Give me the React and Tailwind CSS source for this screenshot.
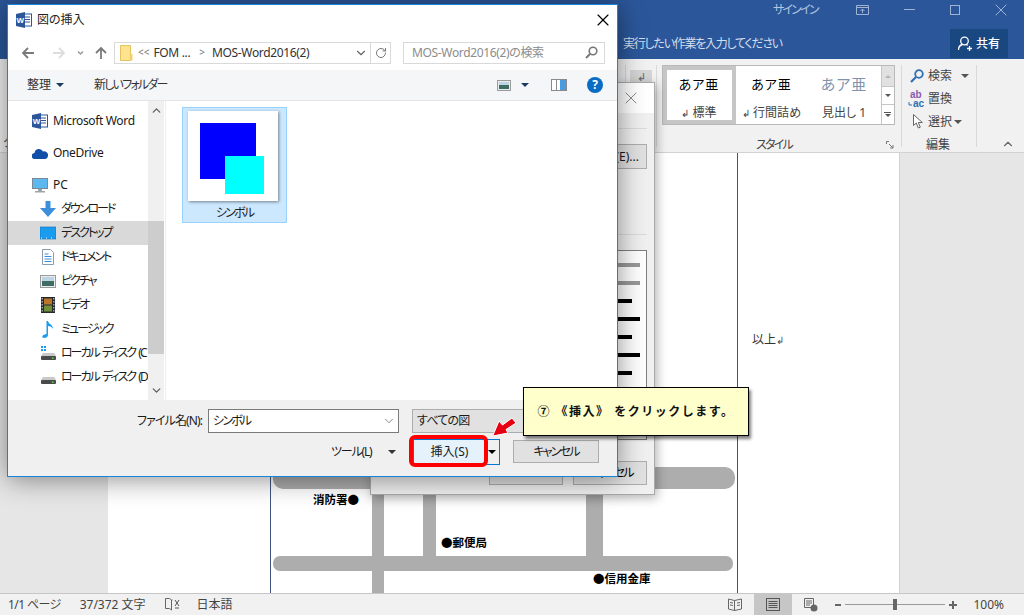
import { ChevronDown, ChevronUp, RotateCw, X } from 'lucide-react'

// kana in the reference is set much tighter than Noto's, even with palt
const KANA = 'tracking-[-1.8px] whitespace-nowrap'
const LATIN = 'tracking-[-0.35px] whitespace-nowrap'

const NAV_ITEMS = [
  { label: 'ダウンロード', icon: 'download' },
  { label: 'デスクトップ', icon: 'desktop', active: true },
  { label: 'ドキュメント', icon: 'doc' },
  { label: 'ピクチャ', icon: 'picture' },
  { label: 'ビデオ', icon: 'video' },
  { label: 'ミュージック', icon: 'music' },
  { label: 'ローカル ディスク (C', icon: 'diskc' },
  { label: 'ローカル ディスク (D', icon: 'disk' },
]

const PREVIEW_BARS = [
  'bg-[#999999] w-[22px]',
  'bg-[#999999] w-[22px]',
  'bg-black w-[14px]',
  'bg-black w-[22px]',
  'bg-black w-[14px]',
  'bg-black w-[22px]',
  'bg-black w-[14px]',
]

function Triangle({ className = 'border-t-[#1f3a60]' }) {
  return <span className={`inline-block w-0 h-0 border-x-[4px] border-x-transparent border-t-[4px] ${className}`} />
}

function WordLogo() {
  return (
    <svg width="16" height="16" viewBox="0 0 16 16">
      <rect x="5" y="2" width="10.5" height="12" fill="#fff" stroke="#2b579a" />
      <path d="M9 5h5M9 7.5h5M9 10h5" stroke="#2b579a" />
      <path d="M0 2l9-2v16l-9-2z" fill="#2b579a" />
      <text x="4.4" y="11" fontSize="8" fontWeight="700" fill="#fff" textAnchor="middle" fontFamily="Liberation Sans">W</text>
    </svg>
  )
}

function NavIcon({ type }) {
  if (type === 'download') {
    return (
      <svg width="16" height="16" viewBox="0 0 16 16">
        <path d="M5.5 0h5v7H16l-8 9-8-9h5.500z" fill="#3d8fdc" />
      </svg>
    )
  }
  if (type === 'desktop') {
    return (
      <svg width="16" height="14" viewBox="0 0 16 14">
        <rect x="0" y="1" width="16" height="12" fill="#1a9cf0" stroke="#0f6fb8" strokeWidth="0.6" />
        <path d="M1 12h14" stroke="#fff" strokeDasharray="1 4" />
      </svg>
    )
  }
  if (type === 'doc') {
    return (
      <svg width="14" height="16" viewBox="0 0 14 16">
        <path d="M1.500.5h8l3 3v12h-11z" fill="#fff" stroke="#8a9bab" />
        <path d="M3.500 5h4M3.500 7.500h7M3.500 10h7M3.500 12.500h7" stroke="#3d8fdc" />
      </svg>
    )
  }
  if (type === 'picture') {
    return (
      <svg width="16" height="13" viewBox="0 0 16 13">
        <rect x="0.500" y="0.500" width="15" height="12" fill="#e8eef2" stroke="#9a9a9a" />
        <rect x="2" y="2" width="12" height="4" fill="#bcd4e4" />
        <rect x="2" y="6" width="12" height="5" fill="#3e6e62" />
      </svg>
    )
  }
  if (type === 'video') {
    return (
      <svg width="14" height="16" viewBox="0 0 14 16">
        <rect width="14" height="16" fill="#24292e" />
        <rect x="3" y="1.500" width="8" height="6" fill="#b9762b" />
        <rect x="3" y="8.500" width="8" height="6" fill="#6f8f3a" />
        <path d="M1.200 1v14M12.800 1v14" stroke="#ddd" strokeDasharray="1.500 1.500" />
      </svg>
    )
  }
  if (type === 'music') {
    return (
      <svg width="12" height="17" viewBox="0 0 12 17">
        <path d="M4.500 0h1.500c.5 3 5 3.500 5 8-1-2-3-3-5-3v9c0 2-2 3-4 3-3 0-2-3.500 2.500-4z" fill="#1a9cf0" />
      </svg>
    )
  }
  return (
    <svg width="15" height="16" viewBox="0 0 15 16">
      {type === 'diskc' && <path d="M0 1h2v2H0zM3 1h2v2H3zM0 4h2v2H0zM3 4h2v2H3z" fill="#1a9cf0" />}
      <path d="M2 8h11l2 3H0z" fill="#c9c9c9" />
      <rect y="11" width="15" height="4" rx="1" fill="#4a4a4a" />
      <rect x="11" y="12.500" width="1.500" height="1.500" fill="#5fdc5f" />
    </svg>
  )
}

function SidebarRow({ item }) {
  return (
    <div className={`h-6 flex items-center pl-[32px] gap-[5px] ${item.active ? 'bg-[#d9d9d9]' : ''}`}>
      <span className="w-4 flex justify-center shrink-0"><NavIcon type={item.icon} /></span>
      <span className="tracking-[-2px] [word-spacing:2px] whitespace-nowrap">{item.label}</span>
    </div>
  )
}

function InsertDialog() {
  return (
    <div className="absolute left-[7px] top-[4px] w-[611px] h-[473px] flex flex-col bg-white border border-[#1883d7] shadow-[0_2px_26px_rgba(0,0,0,0.45)] text-[#1a1a1a]">
      <div className="h-[30px] flex items-center pl-[8px] pr-[4px] gap-[5px] shrink-0">
        <WordLogo />
        <span className="text-[#222] text-[12px]">図の挿入</span>
        <X className="ml-auto" size={20} strokeWidth={1.4} color="#000" />
      </div>

      <div className="h-[35px] flex items-center shrink-0">
        <svg className="ml-[13px]" width="94" height="16" viewBox="0 0 94 16" fill="none">
          <path d="M13 8H2M7 3L2 8l5 5" stroke="#7a7a7a" strokeWidth="1.800" />
          <path d="M32 8h11M38 3l5 5-5 5" stroke="#dddddd" strokeWidth="1.800" />
          <path d="M57 6.500l2.500 2.500 2.500-2.500" stroke="#9a9a9a" strokeWidth="1.500" />
          <path d="M80 14V3M75 8l5-5 5 5" stroke="#7a7a7a" strokeWidth="1.800" />
        </svg>
        <div className="ml-[-1px] w-[277px] h-[22px] border border-[#d9d9d9] flex items-center">
          <svg className="ml-[5px] shrink-0" width="13" height="16" viewBox="0 0 13 16">
            <path d="M.5.5h10v15h-10z" fill="#ffe38f" stroke="#e3c25f" />
            <path d="M10.500 9h2v6.500h-2z" fill="#f3d071" />
          </svg>
          <span className="ml-[5px] text-[#777] text-[10px]">&lt;&lt;</span>
          <span className={`ml-[4px] text-[#333] ${LATIN}`}>FOM ...</span>
          <span className="ml-[9px] text-[#777] text-[10px]">&gt;</span>
          <span className={`ml-[7px] text-[#333] ${LATIN}`}>MOS-Word2016(2)</span>
          <ChevronDown className="ml-auto mr-[2px]" size={14} strokeWidth={2} color="#666" />
          <div className="w-[20px] h-full border-l border-[#d9d9d9] flex items-center justify-center">
            <RotateCw size={12} strokeWidth={2} color="#777" />
          </div>
        </div>
        <div className="ml-[12px] w-[202px] h-[22px] border border-[#d9d9d9] flex items-center pl-[8px] pr-[6px] text-[#8c8c8c]">
          <span className={LATIN}>MOS-Word2016(2)の検索</span>
          <svg className="ml-auto" width="13" height="13" viewBox="0 0 13 13" fill="none">
            <circle cx="8" cy="5" r="3.800" stroke="#777" strokeWidth="1.600" />
            <path d="M5 8l-4 4" stroke="#777" strokeWidth="2" />
          </svg>
        </div>
      </div>

      <div className="h-[31px] shrink-0 flex items-center bg-[#f5f6f7] border-b border-[#e5e5e5] pl-[19px] pr-[14px] text-[#333]">
        <span>整理</span>
        <span className="ml-[5px] flex"><Triangle /></span>
        <span className={`ml-[30px] ${KANA}`}>新しいフォルダー</span>
        <svg className="ml-auto" width="14" height="11" viewBox="0 0 14 11">
          <rect x="0.500" y="0.500" width="13" height="10" fill="#e8eef2" stroke="#9a9a9a" />
          <rect x="2" y="2" width="10" height="3" fill="#bcd4e4" />
          <rect x="2" y="5" width="10" height="4" fill="#3e6e62" />
        </svg>
        <span className="ml-[10px] flex"><Triangle /></span>
        <svg className="ml-[22px]" width="16" height="12" viewBox="0 0 16 12">
          <rect x="0.500" y="0.500" width="15" height="11" fill="#fff" stroke="#8a8a8a" />
          <path d="M5.500 1v10" stroke="#8a8a8a" />
          <rect x="9" y="1" width="6" height="10" fill="#4a9ce0" />
        </svg>
        <span className="ml-[20px] w-4 h-4 rounded-full bg-[#0a6cc4] text-white font-bold text-[12px] leading-none flex items-center justify-center">?</span>
      </div>

      <div className="flex-1 flex min-h-0">
        <div className="w-[140px] pt-[8px] shrink-0 overflow-hidden">
          <div className={`h-6 flex items-center pl-[24px] gap-[5px] ${LATIN}`}><WordLogo />Microsoft Word</div>
          <div className={`h-6 mt-2 flex items-center pl-[24px] gap-[5px] ${LATIN}`}>
            <svg width="16" height="11" viewBox="0 0 16 11">
              <path d="M3 11a3 3 0 01-.5-6A4.500 4.500 0 0111 3.500 3.800 3.800 0 0116 7.500c0 2-1.500 3.500-3 3.500z" fill="#0f4fa8" />
            </svg>
            OneDrive
          </div>
          <div className="h-6 mt-2 flex items-center pl-[24px] gap-[5px]">
            <svg width="16" height="15" viewBox="0 0 16 15">
              <rect x="0.500" y="0.500" width="15" height="10" fill="#5cb8ee" stroke="#7a8a96" />
              <path d="M6 11h4v2H6zM3 13h10v1.500H3z" fill="#9aa5ad" />
            </svg>
            PC
          </div>
          {NAV_ITEMS.map((item) => <SidebarRow key={item.label} item={item} />)}
        </div>
        <div className="w-[16px] shrink-0 bg-[#f0f0f0] flex flex-col items-center relative">
          <ChevronUp className="mt-[3px]" size={13} strokeWidth={2.500} color="#606060" />
          <div className="absolute left-0 right-0 top-[120px] h-[133px] bg-[#cdcdcd]" />
          <ChevronDown className="mt-auto mb-[3px]" size={13} strokeWidth={2.500} color="#606060" />
        </div>
        <div className="w-[2px] border-r border-[#eeeeee] shrink-0" />
        <div className="flex-1 pl-[16px] pt-[6px]">
          <div className="w-[105px] h-[116px] bg-[#cce8ff] border border-[#99d1ff] flex flex-col items-center pt-[3px]">
            <div className="w-[90px] h-[90px] mr-[4px] bg-white shadow-[1px_1px_3px_rgba(0,0,0,0.45)] relative">
              <div className="absolute left-[12px] top-[12px] w-[56px] h-[56px] bg-[#0000ff]" />
              <div className="absolute left-[37px] top-[45px] w-[39px] h-[38px] bg-[#00ffff]" />
            </div>
            <span className={`mt-[3px] text-[#222] ${KANA}`}>シンボル</span>
          </div>
        </div>
      </div>

      <div className="h-[76px] shrink-0 bg-[#f0f0f0] flex flex-col pt-[9px]">
        <div className="flex items-center h-[24px]">
          <span className="ml-[129px] w-[71px] tracking-[-0.9px] whitespace-nowrap">ファイル名(N):</span>
          <div className="w-[191px] h-[24px] bg-white border border-[#7a7a7a] flex items-center pl-[4px] pr-[2px]">
            <span className={KANA}>シンボル</span>
            <ChevronDown className="ml-auto" size={14} strokeWidth={1.200} color="#555" />
          </div>
          <div className="ml-[13px] w-[194px] h-[24px] bg-[#e1e1e1] border border-[#adadad] flex items-center pl-[4px] tracking-[-0.8px]">すべての図</div>
        </div>
        <div className="flex items-center mt-[5px] h-[27px]">
          <span className="ml-[323px] w-[40px] tracking-[-1.2px] whitespace-nowrap">ツール(L)</span>
          <span className="ml-[17px] flex"><Triangle className="border-t-[#333]" /></span>
          <div className="ml-[17px] w-[87px] h-[26px] flex border border-[#0078d7]">
            <div className="flex-1 bg-[#e5f1fb] flex items-center justify-center">挿入(S)</div>
            <div className="w-[14px] flex items-center justify-center"><Triangle className="border-t-black" /></div>
          </div>
          <div className={`ml-[13px] w-[86px] h-[23px] bg-[#e1e1e1] border border-[#adadad] flex items-center justify-center ${KANA}`}>キャンセル</div>
        </div>
      </div>
    </div>
  )
}

function BackDialog() {
  return (
    <div className="absolute left-[370px] top-[82px] w-[285px] h-[413px] flex flex-col items-end bg-[#f0f0f0] border border-[#a9a9a9] shadow-[2px_3px_10px_rgba(0,0,0,0.3)] pr-[7px]">
      <div className="h-[30px] self-stretch -mr-[7px] bg-white flex items-center justify-end pr-[13px] shrink-0">
        <X size={20} strokeWidth={1.2} color="#8a8a8a" />
      </div>
      <div className="mt-[15px] self-stretch border-t border-[#dcdcdc]" />
      <div className="mt-[15px] w-[100px] h-[25px] bg-[#e1e1e1] border border-[#adadad] flex items-center justify-end pr-[7px] text-[#1a1a1a]">
        (E)...
      </div>
      <div className="mt-[65px] self-stretch border-t border-[#dcdcdc]" />
      <div className="mt-[15px] w-[200px] h-[190px] bg-white border border-[#7f7f7f] flex flex-col items-start pt-[12px] pl-[170px] gap-[14px]">
        {PREVIEW_BARS.map((cls, i) => (
          <div key={i} className={`h-[4px] ${cls}`} />
        ))}
      </div>
      <div className="mt-[21px] flex gap-[10px]">
        <div className="w-[74px] h-[24px] bg-[#e1e1e1] border border-[#adadad] flex items-center justify-center">OK</div>
        <div className={`w-[74px] h-[24px] bg-[#e1e1e1] border border-[#adadad] flex items-center justify-center ${KANA}`}>キャンセル</div>
      </div>
    </div>
  )
}

function StyleItem({ sample, label, mark, w, selected, heading }) {
  return (
    <div className={`h-full flex flex-col items-center shrink-0 ${selected ? 'border-[4px] border-[#c6c6c6] pt-[4px]' : 'pt-[8px]'}`} style={{ width: w }}>
      <span className={`leading-[20px] tracking-[1px] whitespace-nowrap ${heading ? 'text-[#7f93ad] text-[15px]' : 'text-black text-[13px]'}`}>{sample}</span>
      <span className="mt-[12px] leading-[14px] text-[#444] whitespace-nowrap">{mark && <span className="text-[10px] mr-[3px]">↲</span>}{label}</span>
    </div>
  )
}

function Ribbon() {
  return (
    <div className="h-[94px] flex bg-[#f1f1f1] border-b border-[#d2d2d2] shrink-0 text-[#444]">
      <div className="w-[662px] shrink-0 flex items-start">
        <span className="mt-[75px] ml-[3px] w-[12px] shrink-0">ク</span>
        <div className="ml-[610px] mt-[6px] h-[82px] w-[32px] shrink-0 border-x border-[#d9d9d9] pl-[4px] pt-[5px]">
          <div className="w-[22px] h-[24px] bg-[#d5d5d5] flex justify-center text-[11px] leading-[14px] text-[#666]">↲</div>
        </div>
      </div>
      <div className="w-[240px] h-[82px] shrink-0 flex flex-col items-center mt-[6px] border-r border-[#d9d9d9] pr-[7px]">
        <div className="h-[60px] w-[233px] shrink-0 flex bg-white border border-[#b9b9b9]">
          <StyleItem sample="あア亜" label="標準" mark w={73} selected />
          <StyleItem sample="あア亜" label="行間詰め" mark w={72} />
          <StyleItem sample="あア亜" label="見出し 1" w={73} heading />
          <div className="ml-auto w-[14px] flex flex-col border-l border-[#c6c6c6]">
            <div className="h-[20px] bg-[#e1e1e1] flex items-center justify-center"><span className="w-0 h-0 border-x-[3px] border-x-transparent border-b-[3px] border-b-[#b5b5b5]" /></div>
            <div className="h-[19px] border-y border-[#c6c6c6] flex items-center justify-center"><span className="w-0 h-0 border-x-[3px] border-x-transparent border-t-[3px] border-t-[#555]" /></div>
            <div className="flex-1 flex flex-col items-center justify-center gap-[1px]">
              <span className="w-[7px] h-[1px] bg-[#555]" />
              <span className="w-0 h-0 border-x-[3px] border-x-transparent border-t-[3px] border-t-[#555]" />
            </div>
          </div>
        </div>
        <div className="self-stretch flex items-center justify-center relative mt-[11px] shrink-0 pr-[8px]">
          <span className={KANA}>スタイル</span>
          <svg className="absolute right-0 top-[5px]" width="8" height="8" viewBox="0 0 8 8" fill="none">
            <path d="M.5 3V.5H3M3 3l4 4M4 7h3V4" stroke="#777" />
          </svg>
        </div>
      </div>
      <div className="w-[75px] h-[82px] shrink-0 flex flex-col border-r border-[#d9d9d9] mt-[6px] pl-[8px]">
        <div className="h-[22px] shrink-0 flex items-center">
          <svg width="14" height="14" viewBox="0 0 14 14" fill="none">
            <circle cx="9" cy="5" r="3.800" stroke="#2f6fb5" strokeWidth="1.800" />
            <path d="M6 8l-5 5" stroke="#2f6fb5" strokeWidth="2.200" />
          </svg>
          <span className="ml-[4px]">検索</span>
          <span className="ml-[9px] flex"><Triangle className="border-t-[#555]" /></span>
        </div>
        <div className="h-[23px] shrink-0 flex items-center -ml-[2px]">
          <svg width="17" height="18" viewBox="0 0 17 18" fontSize="10" fontWeight="700" fontFamily="Liberation Sans">
            <text x="2" y="8" fill="#8a5bb0">ab</text>
            <text x="5" y="17" fill="#2f6fb5">ac</text>
            <path d="M1 12v3h3" fill="none" stroke="#2f6fb5" />
          </svg>
          <span className="ml-[3px]">置換</span>
        </div>
        <div className="h-[23px] shrink-0 flex items-center">
          <svg className="ml-[3px]" width="10" height="15" viewBox="0 0 10 15">
            <path d="M.5.500v11l2.800-2.500 2 5 2-.8-2-4.700h4z" fill="#fff" stroke="#666" />
          </svg>
          <span className="ml-[5px]">選択</span>
          <span className="ml-[2px] flex"><Triangle className="border-t-[#555]" /></span>
        </div>
        <span className="mt-[3px] ml-[16px] shrink-0">編集</span>
      </div>
      <div className="flex-1 flex items-end pl-[24px] pb-[1px]">
        <ChevronUp size={14} strokeWidth={2} color="#666" />
      </div>
    </div>
  )
}

function RoadMap() {
  return (
    <svg className="absolute left-0 top-0" width="466" height="440" viewBox="271 153 466 440">
      <g fill="#adadad">
        <rect x="273" y="467" width="462" height="22" rx="10" />
        <rect x="273" y="556" width="460" height="15" rx="7" />
        <rect x="372" y="480" width="12" height="113" />
        <rect x="423" y="480" width="13" height="80" />
        <rect x="586" y="480" width="17" height="80" />
      </g>
    </svg>
  )
}

function DocumentArea() {
  return (
    <div className="flex-1 flex bg-[#e6e6e6] min-h-0">
      <div className="ml-[108px] w-[792px] h-full bg-white border-r border-[#d2d2d2] pl-[162px] flex">
        <div className="w-[468px] h-full border-x border-[#3f5580] relative shrink-0 font-bold text-[11.5px] text-black [font-feature-settings:normal]">
          <RoadMap />
          <span className="absolute left-[42px] top-[338px] whitespace-nowrap">消防署●</span>
          <span className="absolute left-[170px] top-[381px] whitespace-nowrap">●郵便局</span>
          <span className="absolute left-[322px] top-[417px] whitespace-nowrap">●信用金庫</span>
        </div>
        <span className="ml-[14px] mt-[178px] text-[#333]">以上<span className="text-[10px] text-[#555]">↲</span></span>
      </div>
    </div>
  )
}

function StatusBar() {
  return (
    <div className="h-[22px] shrink-0 flex items-center bg-[#f1f1f1] border-t border-[#c6c6c6] text-[#444] pl-[8px]">
      <span className="whitespace-nowrap tracking-[-0.6px]">1/1 ページ</span>
      <span className="ml-[19px] whitespace-nowrap">37/372 文字</span>
      <svg className="ml-[19px]" width="15" height="13" viewBox="0 0 15 13" fill="none">
        <path d="M.5.5h4l2 1.500v10l-2-1.500h-4zM6.500 2h1" stroke="#666" />
        <path d="M10 2l4 6M14 2l-4 6M10 10h4" stroke="#555" />
      </svg>
      <span className="ml-[17px]">日本語</span>
      <svg className="ml-auto" width="14" height="13" viewBox="0 0 14 13" fill="none">
        <path d="M.5 1l6 1.500v10l-6-1.500zM13.500 1l-7 1.500v10l7-1.500z" stroke="#666" />
        <path d="M2 4.500l3 .5M2 7l3 .5M9 5l3-.5M9 7.500l3-.5" stroke="#666" />
      </svg>
      <div className="ml-[12px] w-[38px] h-full bg-[#c6c6c6] flex items-center justify-center">
        <svg width="14" height="13" viewBox="0 0 14 13" fill="none">
          <rect x="0.500" y="0.500" width="13" height="12" stroke="#555" />
          <path d="M2.500 3.500h9M2.500 5.500h9M2.500 7.500h9M2.500 9.500h9" stroke="#555" />
        </svg>
      </div>
      <svg className="ml-[12px]" width="14" height="14" viewBox="0 0 14 14" fill="none">
        <path d="M.5.500h9v9h-9zM2 3h6M2 5h6M2 7h4" stroke="#666" />
        <circle cx="10" cy="10" r="3.500" fill="#666" />
      </svg>
      <span className="ml-[17px] w-[6px] h-[2px] bg-[#666]" />
      <div className="ml-[4px] w-[100px] h-[1px] bg-[#9a9a9a] relative">
        <span className="absolute left-[48px] -top-[5px] w-[4px] h-[11px] bg-[#666]" />
      </div>
      <span className="ml-[4px] w-[8px] h-[8px] relative">
        <span className="absolute left-0 top-[3px] w-[8px] h-[2px] bg-[#666]" />
        <span className="absolute left-[3px] top-0 w-[2px] h-[8px] bg-[#666]" />
      </span>
      <span className="ml-[16px] mr-[20px]">100%</span>
    </div>
  )
}

export default function App() {
  return (
    <div className="relative w-[1024px] h-[615px] overflow-hidden flex flex-col text-[12px] font-['Noto_Sans','Noto_Sans_CJK_JP',sans-serif] [font-feature-settings:'palt']">
      <div className="h-[59px] shrink-0 bg-[#2b579a] flex flex-col">
        <div className="h-[19px] flex items-center text-[#b4c6e0]">
          <span className={`ml-[773px] w-[47px] ${KANA}`}>サインイン</span>
          <svg className="ml-[36px]" width="13" height="10" viewBox="0 0 13 10" fill="none">
            <path d="M.5.500h12v9H.5zM.5 2.500h12M6.500 8V4M4.500 6l2-2 2 2" stroke="#9fb4d4" />
          </svg>
          <span className="ml-[35px] w-[11px] h-[1px] bg-[#9fb4d4]" />
          <span className="ml-[35px] w-[10px] h-[10px] border border-[#9fb4d4]" />
          <X className="ml-[31px]" size={20} strokeWidth={1.200} color="#9fb4d4" />
        </div>
        <div className="flex-1 flex items-start">
          <span className="ml-[623px] mt-[16px] text-[#d3deee] tracking-[-1.25px] whitespace-nowrap">実行したい作業を入力してください</span>
          <div className="ml-auto mr-[16px] mt-[10px] w-[58px] h-[29px] bg-[#19477f] flex items-center justify-center gap-[3px] text-white">
            <svg width="15" height="15" viewBox="0 0 15 15" fill="none">
              <circle cx="6.500" cy="5" r="3.800" stroke="#fff" strokeWidth="1.300" />
              <path d="M.5 14c0-3 2-5 4-5.500M8.500 8.500l1 1M9 12.500h5M11.500 10v5" stroke="#fff" strokeWidth="1.300" />
            </svg>
            <span className="font-medium">共有</span>
          </div>
        </div>
      </div>

      <Ribbon />
      <DocumentArea />
      <StatusBar />

      <BackDialog />
      <InsertDialog />

      <div className="absolute left-[523px] top-[387px] w-[226px] h-[49px] bg-[#ffffcc] border border-black shadow-[2px_3px_3px_rgba(0,0,0,0.5)] flex items-center justify-center font-bold text-[#111] tracking-[1.5px] whitespace-nowrap [font-feature-settings:normal]">
        ⑦ 《挿入》 をクリックします。
      </div>
      <div className="absolute left-[409px] top-[435px] w-[79px] h-[32px] border-[4px] border-[#ff0000] rounded-[6px]" />
      <svg className="absolute left-[489px] top-[416px]" width="30" height="24" viewBox="0 0 30 24">
        <path d="M3.700 20L10 5l3.500 4L23 2l4 5-10 6.500 2 3.500z" fill="#e60012" stroke="#fff" strokeWidth="1" />
      </svg>
    </div>
  )
}
